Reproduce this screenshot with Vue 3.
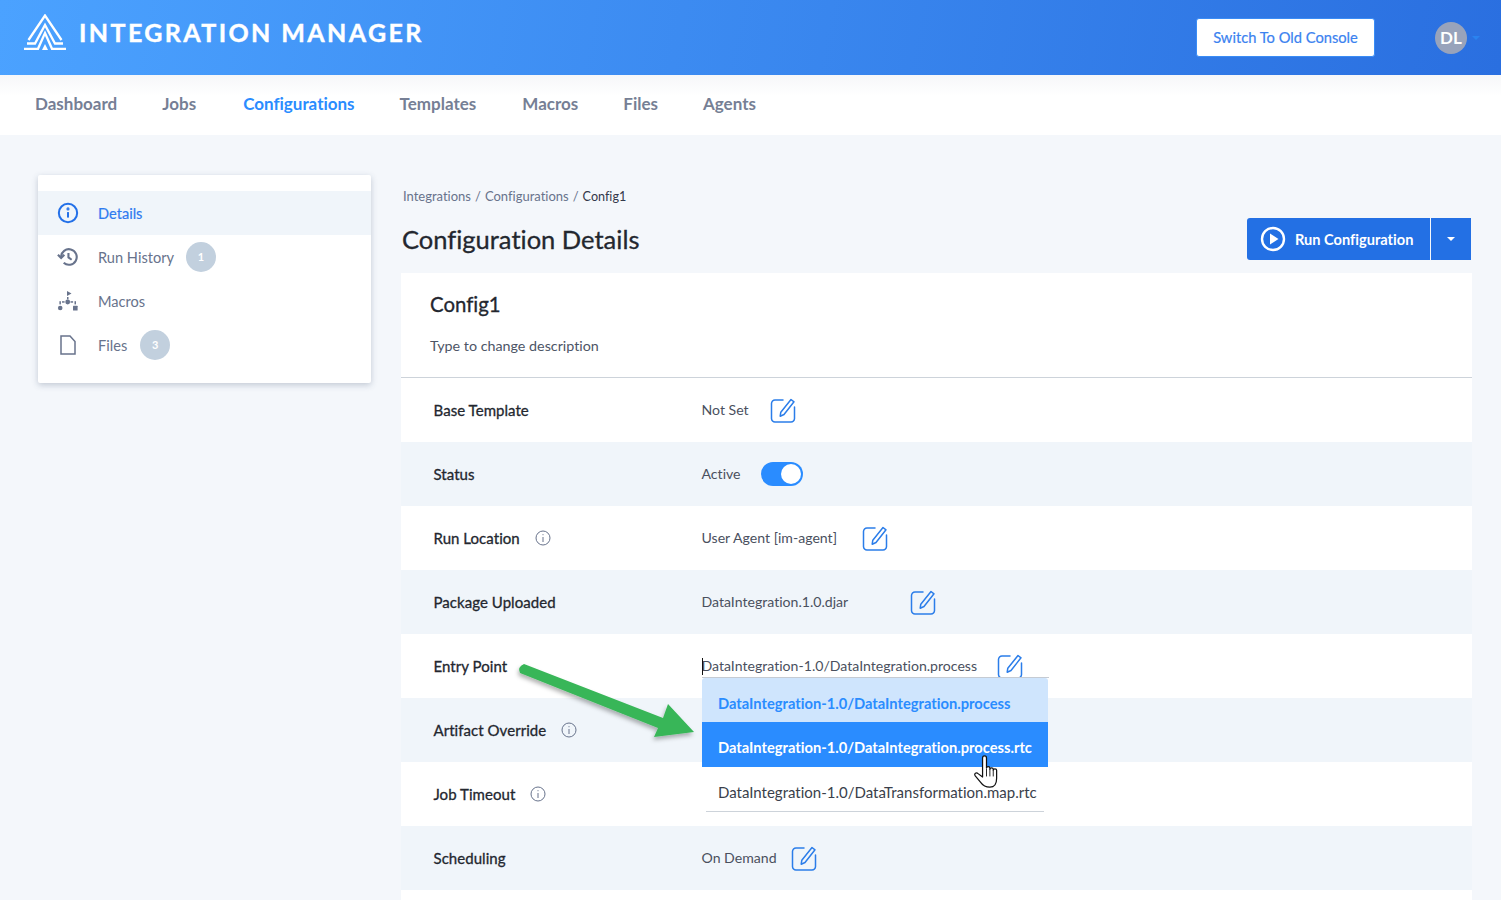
<script setup>
const nav = ['Dashboard', 'Jobs', 'Configurations', 'Templates', 'Macros', 'Files', 'Agents']
const rows = [
  { label: 'Base Template', value: 'Not Set', edit: 21 },
  { label: 'Status', value: 'Active', toggle: true },
  { label: 'Run Location', info: true, value: 'User Agent [im-agent]', edit: 25 },
  { label: 'Package Uploaded', value: 'DataIntegration.1.0.djar', edit: 62 },
  { label: 'Entry Point', value: 'DataIntegration-1.0/DataIntegration.process', edit: 20, entry: true },
  { label: 'Artifact Override', info: true },
  { label: 'Job Timeout', info: true },
  { label: 'Scheduling', value: 'On Demand', edit: 14 },
  { label: '' }
]
const options = [
  { text: 'DataIntegration-1.0/DataIntegration.process', cls: 'selected' },
  { text: 'DataIntegration-1.0/DataIntegration.process.rtc', cls: 'hover' },
  { text: 'DataIntegration-1.0/DataTransformation.map.rtc', cls: 'plain' }
]
</script>

<template>
  <div class="page">
    <header class="top">
      <div class="brand">
        <svg class="logo" viewBox="0 0 42 36" width="42" height="36" fill="none" stroke="#fff" stroke-width="2.300">
          <path d="M4.500 26 L21 1.500 L37.500 26" />
          <path d="M3 29.500 H11 L21 11 L31 29.500 H39" />
          <path d="M0 34.800 H14 L21 19 L28 34.800 H42" />
          <path d="M21 30 L24 36 H18z" fill="#fff" stroke="none" />
        </svg>
        <span class="brand-name">INTEGRATION MANAGER</span>
      </div>
      <div class="top-right">
        <button class="old">Switch To Old Console</button>
        <div class="avatar">DL</div>
        <span class="caret-blue"></span>
      </div>
    </header>

    <nav class="nav">
      <a v-for="n in nav" :key="n" :class="{ active: n === 'Configurations' }">{{ n }}</a>
    </nav>

    <main class="content">
      <aside class="side">
        <div class="side-item current">
          <svg class="side-icon" viewBox="0 0 24 24" width="22" height="22" fill="none" stroke="#2370e8" stroke-width="2.200">
            <circle cx="12" cy="12" r="10" /><path d="M12 11v6" /><circle cx="12" cy="7.500" r="0.600" />
          </svg>
          <span>Details</span>
        </div>
        <div class="side-item">
          <svg class="side-icon" viewBox="0 0 24 24" width="22" height="22" fill="none" stroke="#68738c" stroke-width="2.300">
            <path d="M4.500 12a8.500 8.500 0 1 1 2.800 6.300" /><path d="M1 9.500l3.500 3.500 3.500-3.500" /><path d="M12.500 7.500v5l3.500 2.500" />
          </svg>
          <span>Run History</span><b class="count">1</b>
        </div>
        <div class="side-item">
          <svg class="side-icon" viewBox="0 0 22 22" width="22" height="22" fill="#68738c" stroke="none">
            <path d="M10 1l4.500 2.500L10 6z" />
            <rect x="10" y="7" width="1.500" height="2.400" /><circle cx="10.700" cy="12" r="2.400" />
            <rect x="5" y="11.200" width="2.600" height="1.500" /><rect x="13.500" y="11.200" width="2.600" height="1.500" />
            <rect x="2.400" y="11.200" width="1.500" height="3.200" /><rect x="17.500" y="11.200" width="1.500" height="3.200" />
            <circle cx="3.200" cy="18" r="2.300" /><rect x="16" y="15.800" width="4.600" height="4.600" rx="0.500" />
          </svg>
          <span>Macros</span>
        </div>
        <div class="side-item">
          <svg class="side-icon" viewBox="0 0 22 22" width="22" height="22" fill="none" stroke="#68738c" stroke-width="1.500">
            <path d="M4 2h9l5 5.500V20H4z" />
          </svg>
          <span>Files</span><b class="count files">3</b>
        </div>
      </aside>

      <section class="main">
        <div class="crumbs">
          <span>Integrations</span><i>/</i><span>Configurations</span><i>/</i><span class="last">Config1</span>
        </div>
        <div class="title-row">
          <h1>Configuration Details</h1>
          <div class="run">
            <span class="run-main">
              <svg viewBox="0 0 26 26" width="26" height="26" fill="none">
                <circle cx="13" cy="13" r="11" stroke="#fff" stroke-width="2.400" />
                <path d="M10 7.500L18.500 13 10 18.500z" fill="#fff" />
              </svg>
              Run Configuration
            </span>
            <span class="run-more"><span class="caret-white"></span></span>
          </div>
        </div>

        <div class="card">
          <div class="card-head">
            <h2>Config1</h2>
            <p>Type to change description</p>
          </div>
          <div v-for="(r, i) in rows" :key="i" class="row" :class="{ alt: i % 2 === 1 }">
            <div class="label">
              {{ r.label }}
              <svg v-if="r.info" class="info" viewBox="0 0 16 16" width="16" height="16" fill="none" stroke="#68738c" stroke-width="1">
                <circle cx="8" cy="8" r="7" /><path d="M8 7v5" /><path d="M8 4.200v1" />
              </svg>
            </div>
            <div class="value" :class="{ entry: r.entry }">
              <span v-if="r.entry" class="text-cursor"></span>
              <span class="vtext">{{ r.value }}</span>
              <svg v-if="r.edit" class="edit" :style="{ marginLeft: r.edit + 'px' }" viewBox="0 0 26 26" width="26" height="26" fill="none" stroke="#2b7de9" stroke-width="1.500">
                <path d="M13 3H5a3.500 3.500 0 0 0-3.500 3.500v15A3.500 3.500 0 0 0 5 25h16a3.500 3.500 0 0 0 3.500-3.500V10" stroke-linecap="round" />
                <path d="M21 2.500l3 2.300-10 12.700-3.800 1.700 .6-4z" stroke-linejoin="round" />
              </svg>
              <span v-if="r.toggle" class="toggle"><span></span></span>
            </div>
          </div>

          <ul class="dropdown">
            <li v-for="o in options" :key="o.text" :class="o.cls">{{ o.text }}</li>
          </ul>

          <svg class="arrow" viewBox="0 0 190 90" width="190" height="90">
            <defs>
              <filter id="arrowShadow" x="-10%" y="-20%" width="120%" height="150%">
                <feDropShadow dx="-1" dy="3" stdDeviation="2" flood-color="#000" flood-opacity="0.300" />
              </filter>
            </defs>
            <path d="M5 2 L144 56 L149 42 L175 70 L135 75 L139 66 L1 11 Q-2 5 5 2z" fill="#38b658" filter="url(#arrowShadow)" />
          </svg>

          <svg class="hand" viewBox="0 1 24 31" width="27" height="35">
            <path d="M8.500 3.500c0-2.500 3.500-2.500 3.500 0v9c0-1.500 3-1.500 3 0v1c0-1.500 3-1.500 3 0v1c0-1.500 3-1.500 3 0v7c0 4-1.500 8-6 8-4 0-6-1-8-4l-5-6c-1.500-2 1-3.500 2.500-2l4 3z" fill="#fff" stroke="#111" stroke-width="1.100" stroke-linejoin="round" />
            <path d="M12 13v7M15 13.500v6.500M18 14.500v5.500" stroke="#111" stroke-width="0.800" fill="none" />
          </svg>
        </div>
      </section>
    </main>
  </div>
</template>

<style>
html, body { margin: 0; background: #f4f7fb; overflow: hidden; }
</style>

<style scoped>
.page { height: 900px; overflow: hidden; font-family: Lato, "Noto Sans", sans-serif; font-variant-ligatures: none; color: #2b2f38; background: #f4f7fb; }
.top { height: 75px; box-sizing: border-box; display: flex; align-items: center; justify-content: space-between; padding: 0 21px 0 24px; background: linear-gradient(100deg, #4ba2ff 0%, #2a6fe0 100%); position: relative; }
.brand { display: flex; align-items: center; gap: 13px; margin-top: -11px; }
.logo { display: block; }
.brand-name { font-weight: 700; font-size: 25px; letter-spacing: 2.400px; color: #fff; -webkit-text-stroke: 0.400px #fff; }
.top-right { display: flex; align-items: center; }
.old { width: 179px; height: 39px; box-sizing: border-box; background: #fff; border: 1px solid #3a8cf5; border-radius: 3px; color: #3b82f0; font: 400 14.700px Lato, sans-serif; font-variant-ligatures: none; -webkit-text-stroke: 0.200px #3b82f0; padding: 0 0 2px; }
.avatar { width: 32px; height: 32px; border-radius: 50%; background: #98a3bb; color: #fff; font-weight: 700; font-size: 17px; line-height: 32px; text-align: center; margin-left: 60px; }
.caret-blue { width: 0; height: 0; border: 4px solid transparent; border-top-color: #2a83f0; border-bottom: 0; margin-left: 5px; }
.nav { height: 60px; box-sizing: border-box; padding: 0 0 3px 35px; background: linear-gradient(#f6f7f9, #fff 35%); display: flex; align-items: center; gap: 45px; font-size: 17px; font-weight: 700; color: #767f95; }
.nav a:nth-child(2) { margin-right: 2px; }
.nav a:nth-child(4) { margin-right: 1px; }
.nav .active { color: #2a8cff; }
.content { display: flex; align-items: flex-start; padding: 40px 29px 0 38px; }
.side { width: 333px; height: 208px; box-sizing: border-box; flex: none; padding-top: 16px; background: #fff; border-radius: 2px; box-shadow: 0 2px 6px rgba(60, 80, 110, .28); }
.side-item { height: 44px; display: flex; align-items: center; padding-left: 19px; font-size: 14.600px; color: #68738c; }
.side-item.current { background: #f0f5fa; color: #2f7bf0; -webkit-text-stroke: 0.200px #2f7bf0; }
.side-icon { flex: none; margin-right: 19px; }
.count { width: 30px; height: 30px; margin-left: 12px; border-radius: 50%; background: #c2d0de; color: #fff; font-size: 11px; font-weight: 700; line-height: 30px; text-align: center; }
.count.files { margin-left: 13px; }
.main { width: 1071px; margin-left: 30px; }
.crumbs { height: 42px; padding: 13px 0 0 2px; box-sizing: border-box; display: flex; align-items: flex-start; font-size: 13px; color: #68738c; line-height: 16px; }
.crumbs i { font-style: normal; margin: 0 4px; }
.crumbs .last { color: #33384a; font-size: 12.600px; line-height: 17px; }
.title-row { height: 56px; display: flex; align-items: flex-start; justify-content: space-between; }
h1 { margin: 0; font-size: 25.500px; font-weight: 400; line-height: 44px; color: #23272f; -webkit-text-stroke: 0.300px #23272f; padding-left: 1px; }
.run { display: flex; height: 42px; margin-top: 1px; margin-right: 1px; color: #fff; font-size: 14.600px; font-weight: 700; }
.run-main { width: 183px; display: flex; align-items: center; gap: 9px; padding-left: 13px; box-sizing: border-box; background: #2370e4; border-radius: 3px 0 0 3px; }
.run-more { width: 40px; margin-left: 1px; display: flex; align-items: center; justify-content: center; background: #2370e4; }
.caret-white { width: 0; height: 0; border: 4px solid transparent; border-top-color: #fff; border-bottom: 0; }
.card { position: relative; background: #fff; }
.card-head { height: 105px; box-sizing: border-box; padding: 17px 29px 0; border-bottom: 1px solid #cdd3da; }
h2 { margin: 0; font-size: 20.400px; font-weight: 400; line-height: 28px; color: #23272f; -webkit-text-stroke: 0.300px #23272f; }
.card-head p { margin: 18px 0 0; font-size: 14.300px; line-height: 20px; color: #4d5566; }
.row { height: 64px; display: flex; align-items: center; padding-left: 32.500px; }
.row.alt { background: #f0f5fa; }
.label { width: 268px; flex: none; display: flex; align-items: center; font-size: 15px; letter-spacing: 0.050px; font-weight: 400; color: #23272f; -webkit-text-stroke: 0.300px #23272f; }
.info { margin-left: 15px; }
.value { display: flex; align-items: center; font-size: 14.100px; color: #4a505e; }
.vtext { padding-bottom: 2px; }
.value.entry { position: relative; width: 347px; height: 64px; }
.value.entry::after { content: ""; position: absolute; left: 0; right: 0; bottom: 20px; height: 1px; background: #c5cbd3; }
.text-cursor { position: absolute; left: 0; top: 24px; width: 1px; height: 17px; background: #111; }
.toggle { width: 42px; height: 24px; margin-left: 20px; border-radius: 12px; background: #2a8cff; display: flex; align-items: center; justify-content: flex-end; padding-right: 2px; box-sizing: border-box; }
.toggle span { width: 20px; height: 20px; border-radius: 50%; background: #fff; }
.dropdown { position: absolute; left: 301px; top: 405px; width: 346px; margin: 0; padding: 0; list-style: none; font-size: 15px; }
.dropdown li { height: 44px; line-height: 50px; padding-left: 16px; box-sizing: border-box; white-space: nowrap; }
.dropdown .selected { background: #cfe5fd; color: #2a8cff; font-weight: 700; font-size: 14.700px; border-radius: 3px 3px 0 0; height: 44px; }
.dropdown .hover { background: #2a8cff; color: #fff; font-weight: 700; font-size: 14.700px; height: 45px; }
.dropdown .plain { background: #fff; color: #3a3f4b; height: 45px; position: relative; }
.dropdown .plain::after { content: ""; position: absolute; left: 4px; right: 4px; bottom: 0; height: 1px; background: #cdd3da; }
.arrow { position: absolute; left: 118px; top: 389px; overflow: visible; }
.hand { position: absolute; left: 572px; top: 482px; }
</style>
